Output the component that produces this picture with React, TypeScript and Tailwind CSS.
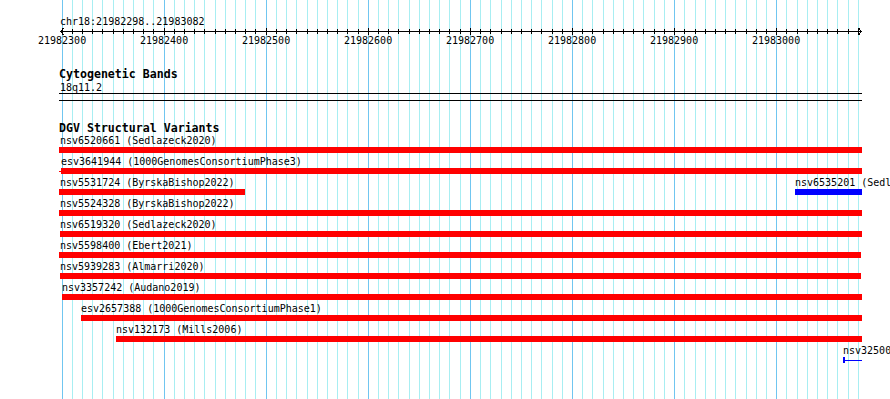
import React from "react";

// GBrowse-style detail panel: chr18:21982298..21983082
const GRID_START = 61.5;
const GRID_STEP = 10.21; // px per 10 bp
const gridX = (k: number) => Math.round(GRID_START + GRID_STEP * k);
const ticks = Array.from({ length: 79 }, (_, k) => ({ x: gridX(k), major: k % 10 === 0 }));
const tickLabels = Array.from({ length: 8 }, (_, i) => ({
  x: gridX(i * 10),
  label: String(21982300 + i * 100),
}));

type Feature = {
  start: number;
  end: number;
  label: string;
  color?: string;
  stub?: number;
};

const RED = "#ff0000";
const BLUE = "#0000ff";

const variants: Feature[][] = [
  [{ start: 59, end: 862, label: "nsv6520661 (Sedlazeck2020)" }],
  [{ start: 61, end: 862, label: "esv3641944 (1000GenomesConsortiumPhase3)", stub: 59 }],
  [
    { start: 59, end: 245, label: "nsv5531724 (ByrskaBishop2022)" },
    { start: 795, end: 862, label: "nsv6535201 (Sedlazeck2020)", color: BLUE },
  ],
  [{ start: 59, end: 862, label: "nsv5524328 (ByrskaBishop2022)" }],
  [{ start: 60, end: 862, label: "nsv6519320 (Sedlazeck2020)" }],
  [{ start: 59, end: 861, label: "nsv5598400 (Ebert2021)" }],
  [{ start: 60, end: 861, label: "nsv5939283 (Almarri2020)" }],
  [{ start: 62, end: 862, label: "nsv3357242 (Audano2019)" }],
  [{ start: 81, end: 862, label: "esv2657388 (1000GenomesConsortiumPhase1)" }],
  [{ start: 116, end: 862, label: "nsv132173 (Mills2006)" }],
];

const Grid = () => (
  <svg
    className="pointer-events-none absolute inset-0"
    width={890}
    height={399}
    shapeRendering="crispEdges"
  >
    {ticks.map((t) => (
      <rect
        key={t.x}
        x={t.x}
        y={0}
        width={1}
        height={399}
        fill={t.major ? "#70c6f0" : "#a8eef2"}
      />
    ))}
  </svg>
);

const Ruler = () => (
  <>
    <svg className="block overflow-visible" width={890} height={6} shapeRendering="crispEdges">
      <rect x={60} y={3} width={802} height={1} fill="#000" />
      {ticks.map((t) => (
        <rect
          key={t.x}
          x={t.x}
          y={t.major ? 0 : 1}
          width={1}
          height={t.major ? 7 : 5}
          fill="#000"
        />
      ))}
      <polyline points="63.5,0 60.5,3.5 63.5,7" fill="none" stroke="#000" strokeWidth={1} />
      <polyline points="858.5,0 861.5,3.5 858.5,7" fill="none" stroke="#000" strokeWidth={1} />
    </svg>
    <div className="relative h-[13px] text-[10px] leading-[13px]">
      {tickLabels.map((t) => (
        <span
          key={t.label}
          className="absolute top-0 w-[48px] text-center"
          style={{ left: t.x - 24 }}
        >
          {t.label}
        </span>
      ))}
    </div>
  </>
);

const VariantRow = ({ features }: { features: Feature[] }) => {
  let cursor = 0;
  return (
    <div className="flex h-[21px] items-start">
      {features.map((f) => {
        const colStart = f.stub ?? f.start;
        const offset = colStart - cursor;
        cursor = f.end;
        const color = f.color ?? RED;
        return (
          <div
            key={f.label}
            className="flex shrink-0 flex-col"
            style={{ marginLeft: offset, width: f.end - colStart }}
          >
            <span
              className="h-[13px] whitespace-pre text-[10px] leading-[13px]"
              style={{ paddingLeft: Math.max(f.start, 60) - colStart }}
            >
              {f.label}
            </span>
            <div className="flex h-[6px] items-center">
              {f.stub !== undefined && (
                <div className="h-px" style={{ width: f.start - f.stub, background: color }} />
              )}
              <div className="h-full flex-1" style={{ background: color }} />
            </div>
          </div>
        );
      })}
    </div>
  );
};

export default function App() {
  return (
    <div className="relative h-[399px] w-[890px] overflow-hidden bg-white font-['DejaVu_Sans_Mono','Liberation_Mono',monospace] text-black">
      <Grid />
      <div className="relative flex flex-col pt-[15px]">
        <div className="pl-[60px] text-[10px] leading-[13px]">chr18:21982298..21983082</div>
        <Ruler />

        <section className="mt-[21px] flex flex-col pl-[59px]">
          <h2 className="h-[13px] text-[11.6px] font-bold leading-[13px]">Cytogenetic Bands</h2>
          <div className="h-[12px] pl-px text-[10px] leading-[13px]">18q11.2</div>
          <div className="flex w-[803px] flex-col gap-[6px]">
            <div className="h-px bg-black" />
            <div className="h-px bg-black" />
          </div>
        </section>

        <section className="mt-[21px] flex flex-col">
          <h2 className="h-[12px] pl-[59px] text-[11.6px] font-bold leading-[12px]">
            DGV Structural Variants
          </h2>
          {variants.map((row, i) => (
            <VariantRow key={i} features={row} />
          ))}
          <div className="flex h-[21px] flex-col pl-[843px]">
            <span className="h-[13px] whitespace-pre text-[10px] leading-[13px]">nsv32500</span>
            <div className="flex h-[6px] items-center">
              <div className="h-full w-[2px] bg-[#0000ff]" />
              <div className="h-px w-[17px] bg-[#0000ff]" />
            </div>
          </div>
        </section>
      </div>
    </div>
  );
}
